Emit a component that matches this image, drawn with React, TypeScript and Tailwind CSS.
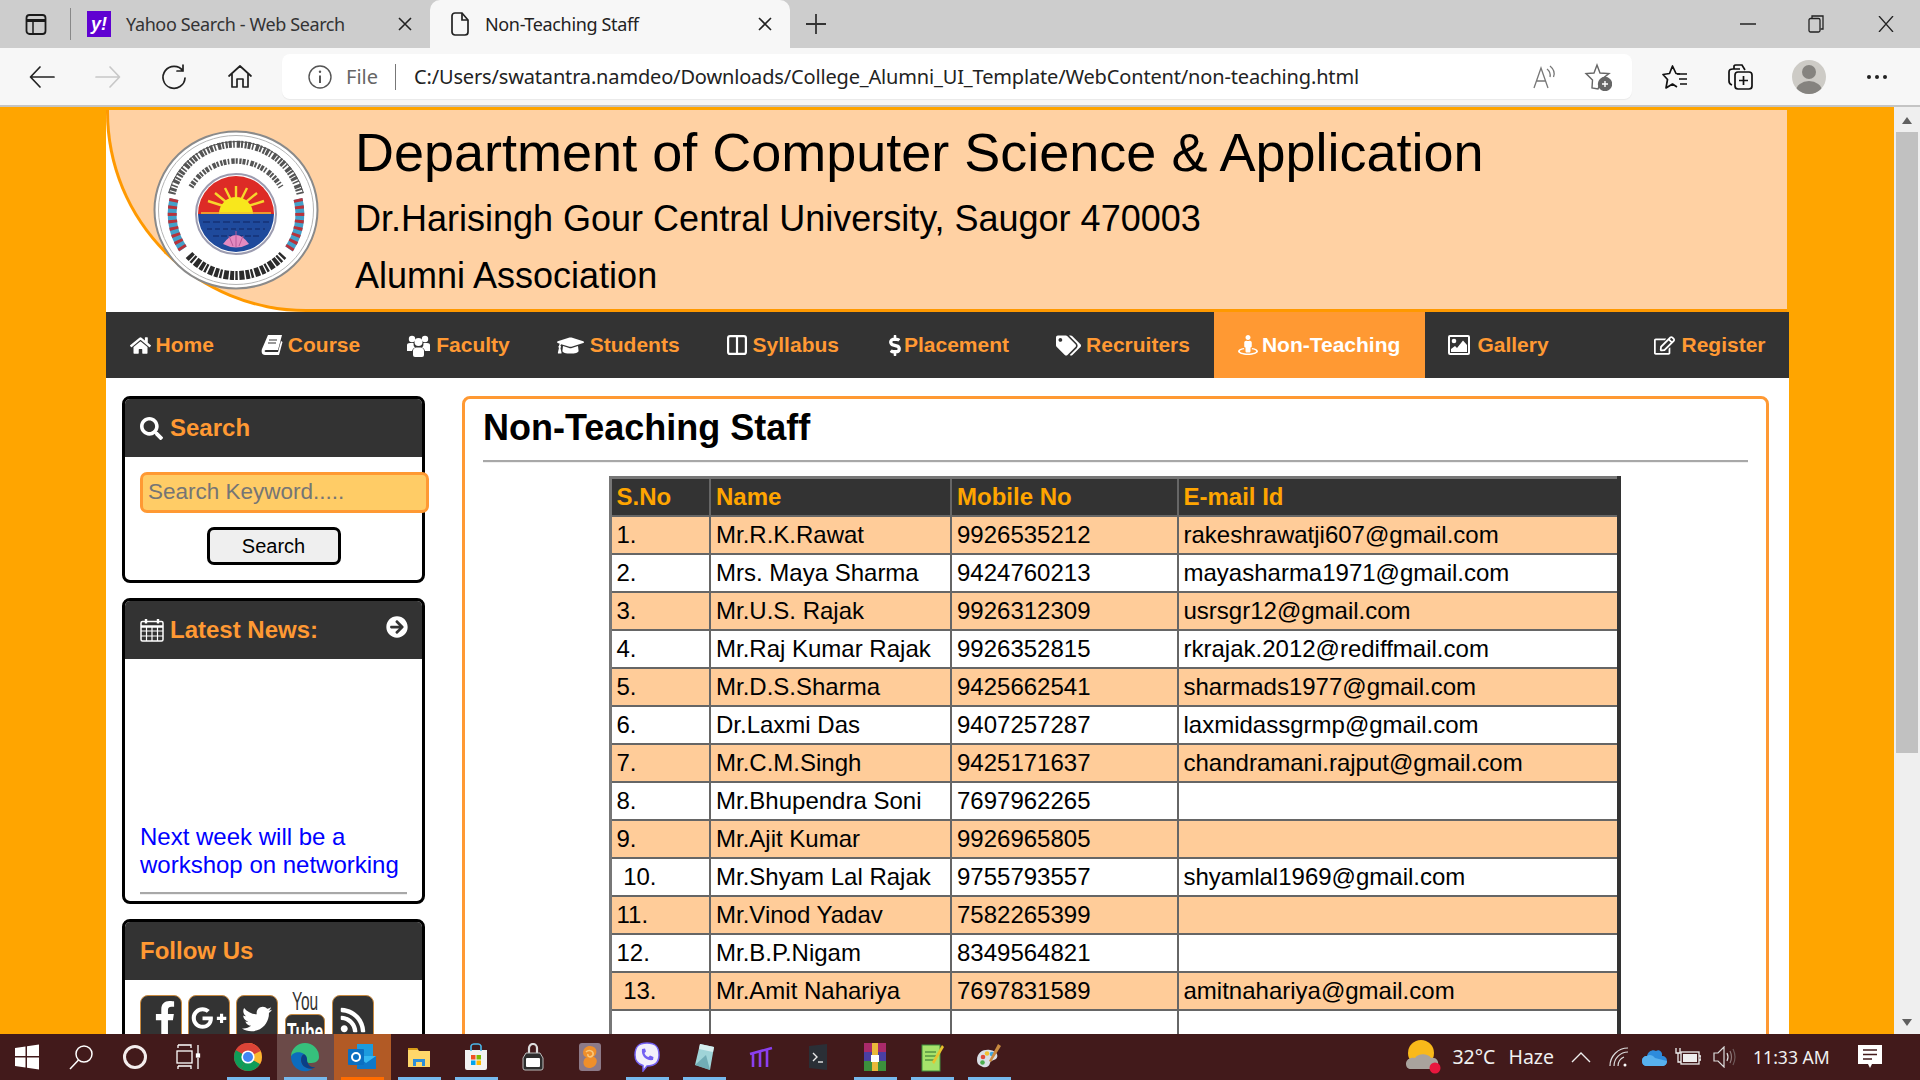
import React from "react";
import { FaHome, FaGraduationCap, FaDollarSign, FaTags, FaStreetView, FaRegEdit, FaSearch, FaArrowCircleRight, FaFacebookF, FaGooglePlusG, FaTwitter, FaRss } from "react-icons/fa";

const UI = { fontFamily: '"Noto Sans", "Open Sans", sans-serif' };

function Logo() {
  const dash1 = "2.2 1 3 1.4 1.6 2 3.4 1 2 1.6";
  return (
    <svg width="166" height="160" viewBox="0 0 166 160" className="shrink-0">
      <ellipse cx="83" cy="80" rx="81.5" ry="78.5" fill="#fff" stroke="#8a8a8a" strokeWidth="2" />
      <ellipse cx="83" cy="80" rx="77.5" ry="74.5" fill="none" stroke="#b5b5b5" strokeWidth="1" />
      <path d="M19 64 A66 66 0 0 1 147 64" fill="none" stroke="#555" strokeWidth="7" strokeDasharray={dash1} />
      <path d="M15.5 63 A70 70 0 0 1 150.5 63" fill="none" stroke="#555" strokeWidth="1" />
      <path d="M38 57 A52 52 0 0 1 128 57" fill="none" stroke="#555" strokeWidth="5.5" strokeDasharray={dash1} />
      <path d="M36 125 A64 64 0 0 0 130 125" fill="none" stroke="#2b2b2b" strokeWidth="9" strokeDasharray="4 1.2 2.4 1.6 5 1.4" />
      <path d="M21 69 A63 63 0 0 0 30 119" fill="none" stroke="#43a0c9" strokeWidth="9" />
      <path d="M21 69 A63 63 0 0 0 30 119" fill="none" stroke="#b8323b" strokeWidth="9" strokeDasharray="3 4" />
      <path d="M145 69 A63 63 0 0 1 136 119" fill="none" stroke="#43a0c9" strokeWidth="9" />
      <path d="M145 69 A63 63 0 0 1 136 119" fill="none" stroke="#b8323b" strokeWidth="9" strokeDasharray="3 4" />
      <circle cx="83" cy="84" r="40" fill="#fff" stroke="#9c9cb0" strokeWidth="2" />
      <path d="M45 84 A38 38 0 0 1 121 84 Z" fill="#dd2b26" />
      <path d="M45 84 A38 38 0 0 0 121 84 Z" fill="#1f4a9c" />
      <g stroke="#f7d62c" strokeWidth="2.4">
        <path d="M83 80 V56" /><path d="M83 80 L72 58" /><path d="M83 80 L94 58" /><path d="M83 80 L62 63" /><path d="M83 80 L104 63" /><path d="M83 80 L55 71" /><path d="M83 80 L111 71" />
      </g>
      <path d="M66 84 A17 17 0 0 1 100 84 Z" fill="#f8e71c" />
      <path d="M48 83 H118" stroke="#f2c230" strokeWidth="1.5" />
      <g stroke="#163275" strokeWidth="1.4" fill="none">
        <path d="M50 92 H116" strokeDasharray="7 3" /><path d="M54 99 H112" strokeDasharray="5 3" /><path d="M60 106 H106" strokeDasharray="6 2" />
      </g>
      <path d="M70 114 Q83 96 96 114 Q83 121 70 114 Z" fill="#e58ac0" />
      <path d="M83 101 V117 M76 106 L80 116 M90 106 L86 116" stroke="#b95b99" strokeWidth="1" />
    </svg>
  );
}

function TabIconBox() {
  return (
    <svg width="24" height="24" viewBox="0 0 24 24" fill="none" stroke="#1a1a1a" strokeWidth="1.8">
      <rect x="2.5" y="3" width="19" height="19" rx="3" />
      <path d="M3 8.5 H21" strokeWidth="3" /><path d="M9 9 V21.5" strokeWidth="1.5" />
    </svg>
  );
}

function Page({ className = "" }: { className?: string }) {
  return (
    <svg width="20" height="24" viewBox="0 0 20 24" fill="none" stroke="#222" strokeWidth="1.7" className={className}>
      <path d="M2 4 a3 3 0 0 1 3 -3 H12 L18 8 V20 a3 3 0 0 1 -3 3 H5 a3 3 0 0 1 -3 -3 Z" /><path d="M12 1 V8 H18" />
    </svg>
  );
}

function ToolIcon({ children, w = 28 }: { children: React.ReactNode; w?: number }) {
  return <svg width={w} height="28" viewBox="0 0 28 28" fill="none" stroke="#222" strokeWidth="1.7" strokeLinecap="round" strokeLinejoin="round">{children}</svg>;
}

function BrowserChrome() {
  return (
    <div style={UI}>
      <div className="flex h-[48px] items-end bg-[#cdcdcd] text-[18px] text-[#333]">
        <div className="flex h-[48px] w-[70px] items-center pl-[24px]"><TabIconBox /></div>
        <div className="h-[32px] w-px self-center bg-[#888]" />
        <div className="flex h-[48px] w-[359px] items-center pl-[16px]">
          <div className="flex h-[26px] w-[24px] items-center justify-center bg-[#5f01d1] text-[18px] font-bold italic text-white" style={{ fontFamily: '"Liberation Sans", sans-serif' }}>y!</div>
          <span className="ml-[15px] w-[272px] whitespace-nowrap tracking-[-0.38px]">Yahoo Search - Web Search</span>
          <svg width="14" height="14" viewBox="0 0 14 14" stroke="#222" strokeWidth="1.6"><path d="M1 1 L13 13 M13 1 L1 13" /></svg>
        </div>
        <div className="flex h-[48px] w-[360px] items-center rounded-t-[10px] bg-[#f7f7f7] pl-[20px]">
          <Page />
          <span className="ml-[15px] w-[273px] whitespace-nowrap tracking-[-0.35px] text-[#222]">Non-Teaching Staff</span>
          <svg width="14" height="14" viewBox="0 0 14 14" stroke="#222" strokeWidth="1.6"><path d="M1 1 L13 13 M13 1 L1 13" /></svg>
        </div>
        <div className="flex h-[48px] w-[50px] items-center pl-[15px]">
          <svg width="22" height="22" viewBox="0 0 22 22" stroke="#333" strokeWidth="1.8"><path d="M11 1 V21 M1 11 H21" /></svg>
        </div>
        <div className="ml-auto flex h-[48px] items-center pr-[26px]">
          <svg width="16" height="16" viewBox="0 0 16 16" stroke="#222" strokeWidth="1.5"><path d="M0 8 H16" /></svg>
          <svg className="ml-[52px]" width="16" height="18" viewBox="0 0 16 18" fill="none" stroke="#222" strokeWidth="1.3"><rect x="1" y="3.5" width="11" height="13.5" rx="1.5" /><path d="M4 3 V1 H15 V14 H12.5" /></svg>
          <svg className="ml-[54px]" width="16" height="16" viewBox="0 0 16 16" stroke="#222" strokeWidth="1.3"><path d="M1 0 L15 16 M15 0 L1 16" /></svg>
        </div>
      </div>
      <div className="flex h-[59px] items-center border-b-2 border-[#c4c4c4] bg-[#f7f7f7]">
        <div className="flex w-[282px] items-center pl-[28px]">
          <div className="w-[66px]"><ToolIcon><path d="M26 14 H3 M12 4 L2.5 14 L12 24" /></ToolIcon></div>
          <div className="w-[66px]"><ToolIcon><path d="M2 14 H25 M16 4 L25.5 14 L16 24" stroke="#c8c8c8" /></ToolIcon></div>
          <div className="w-[66px]"><ToolIcon><path d="M23 8 A11 11 0 1 0 25 15 M23 2 V8 H17" /></ToolIcon></div>
          <ToolIcon><path d="M3 13 L14 3 L25 13 M6 11 V24 H11 V16 H17 V24 H22 V11" /></ToolIcon>
        </div>
        <div className="flex h-[45px] w-[1350px] items-center rounded-[8px] bg-white pl-[26px] shadow-[0_1px_1px_rgba(0,0,0,0.06)]">
          <svg width="24" height="24" viewBox="0 0 24 24" fill="none" stroke="#555" strokeWidth="1.4"><circle cx="12" cy="12" r="11" /><path d="M12 10.5 V18" strokeWidth="2" /><circle cx="12" cy="6.8" r="1.2" fill="#555" stroke="none" /></svg>
          <span className="ml-[14px] text-[20px] text-[#666]">File</span>
          <div className="ml-[17px] h-[26px] w-px bg-[#777]" />
          <span className="ml-[18px] whitespace-nowrap text-[20px] tracking-[-0.16px] text-[#222]">C:/Users/swatantra.namdeo/Downloads/College_Alumni_UI_Template/WebContent/non-teaching.html</span>
          <div className="ml-auto flex items-center gap-[26px] pr-[20px]">
            <svg width="26" height="26" viewBox="0 0 26 26" fill="none" stroke="#777" strokeWidth="1.3"><path d="M2 24 L9 4 L16 24 M4.5 17 H13.5" /><path d="M15 5 Q19 8 18 13 M18 2 Q24 7 21.5 13" /></svg>
            <svg width="28" height="28" viewBox="0 0 28 28" fill="none" stroke="#666" strokeWidth="1.4"><path d="M13 2 L16 10 L25 10.5 L18 16 L14 26 L8 25 L8.5 17 L2 10.5 L10 10 Z" /><circle cx="21" cy="21" r="6.5" fill="#666" /><path d="M21 18 V24 M18 21 H24" stroke="#fff" strokeWidth="1.4" /></svg>
          </div>
        </div>
        <div className="flex flex-1 items-center pl-[30px]">
          <div className="w-[64px]"><svg width="26" height="26" viewBox="0 0 26 26" fill="none" stroke="#111" strokeWidth="1.7" strokeLinejoin="round"><path d="M18 10 L14 9.5 L10.5 2 L7.5 9.5 L1 10.5 L5.5 15.5 L4 24 L10.5 20 L15 23" /><path d="M15 10 H25 M17 15 H25 M18 20 H25" /></svg></div>
          <div className="w-[66px]"><svg width="28" height="28" viewBox="0 0 28 28" fill="none" stroke="#111" strokeWidth="1.7"><path d="M8 6 V3 a2 2 0 0 1 2 -1 H16 L19 7 M6 22 Q3 21 3 18 V9 Q3 6 7 6 H14" /><rect x="9" y="9" width="17" height="17" rx="3" /><path d="M17.5 13 V22 M13 17.5 H22" /></svg></div>
          <div className="flex h-[34px] w-[34px] items-end justify-center overflow-hidden rounded-full bg-[#cdcbc6]">
            <svg width="34" height="34" viewBox="0 0 34 34" fill="#85837f"><circle cx="17" cy="12" r="7" /><ellipse cx="17" cy="31" rx="13" ry="10" /></svg>
          </div>
          <svg className="ml-[40px]" width="22" height="6" viewBox="0 0 22 6" fill="#222"><circle cx="3" cy="3" r="2" /><circle cx="11" cy="3" r="2" /><circle cx="19" cy="3" r="2" /></svg>
        </div>
      </div>
    </div>
  );
}

function BookIcon() {
  return <svg width="22" height="22" viewBox="0 0 22 22" fill="#fff"><path d="M7 1 H21 L17 16 H5 C3.5 16 3 17.5 4.5 18 H17 L20 7 L21.5 8 L18 21 H4 C1 21 0 18 1 15 Z" /><path d="M8 6 H16 M7 9 H15" stroke="#333" strokeWidth="1.2" /></svg>;
}
function FacultyIcon() {
  return <svg width="23" height="23" viewBox="0 0 23 23" fill="#fff"><circle cx="5" cy="5" r="3.2" /><circle cx="18" cy="5" r="3.2" /><circle cx="11.5" cy="8" r="4" /><path d="M0 11 Q0 9 3 9 H6.5 Q6.2 12 8 13.5 Q5.5 14 5 17 H0 Z" /><path d="M23 11 Q23 9 20 9 H16.5 Q16.8 12 15 13.5 Q17.5 14 18 17 H23 Z" /><path d="M6 17 Q6 14 9 13.5 H14 Q17 14 17 17 V21 Q17 23 15 23 H8 Q6 23 6 21 Z" /></svg>;
}
function ColumnsIcon() {
  return <svg width="20" height="20" viewBox="0 0 20 20" fill="none" stroke="#fff" strokeWidth="2.2"><rect x="1.1" y="1.1" width="17.8" height="17.8" rx="2" /><path d="M10 1 V19" /></svg>;
}
function GalleryIcon() {
  return <svg width="22" height="20" viewBox="0 0 22 20"><rect x="1" y="1" width="20" height="18" rx="1" fill="#333" stroke="#fff" strokeWidth="2" /><circle cx="6" cy="6" r="2.3" fill="#fff" /><path d="M3 17 V14 L7 11 L9 13 L15 5.5 L19 10 V17 Z" fill="#fff" /></svg>;
}
function CalendarIcon() {
  return <svg width="24" height="24" viewBox="0 0 24 24" fill="none" stroke="#fff" strokeWidth="1.5"><rect x="1" y="3.5" width="22" height="19.5" rx="1.5" /><path d="M1 8.5 H23" strokeWidth="2.5" /><path d="M1 13 H23 M1 18 H23 M6.5 9 V23 M12 9 V23 M17.5 9 V23" strokeWidth="1.2" /><path d="M6 1 V5.5 M18 1 V5.5" strokeWidth="2.4" /></svg>;
}

function NavItem({ icon, label, box, active = false, className = "" }: { icon: React.ReactNode; label: string; box: string; active?: boolean; className?: string }) {
  return (
    <div className={`flex h-full items-center px-[23.5px] ${active ? "bg-[#ff9933] text-white" : "text-[#ff9933]"} ${className}`}>
      <span className={`flex text-white ${box}`}>{icon}</span>
      <span>{label}</span>
    </div>
  );
}

function Panel({ header, children, className = "" }: { header: React.ReactNode; children: React.ReactNode; className?: string }) {
  return (
    <section className={`w-[303px] shrink-0 rounded-[8px] border-[3px] border-black bg-white ${className}`}>
      <div className="flex h-[58px] items-center rounded-t-[5px] bg-[#333] px-[15px] text-[24px] font-bold text-[#ff9933]">{header}</div>
      {children}
    </section>
  );
}

function SocialBox({ children }: { children: React.ReactNode }) {
  return <div className="flex h-[58px] w-[42px] items-center justify-center rounded-[8px] border border-[#c98a3f] bg-[#333] text-white">{children}</div>;
}

function Sidebar() {
  return (
    <aside className="flex w-[303px] shrink-0 flex-col gap-[15px]">
      <Panel header={<><FaSearch className="mr-[7px] text-[23px] text-white" /><span>Search</span></>} className="h-[187px]">
        <div className="flex flex-col items-center">
          <div className="mt-[15px] ml-[15px] flex h-[41px] w-[289px] shrink-0 items-center self-start rounded-[7px] border-[3.5px] border-[#ff9933] bg-[#ffcc66] pb-[2px] pl-[5px] text-[22.5px] text-[#757575]">Search Keyword.....</div>
          <button className="mt-[14px] h-[38px] w-[134px] rounded-[7px] border-[3px] border-black bg-[#efefef] text-[20px] text-black">Search</button>
        </div>
      </Panel>
      <Panel header={<><span className="mr-[6px] flex"><CalendarIcon /></span><span>Latest News:</span><FaArrowCircleRight className="ml-auto mr-[-1px] mb-[6px] text-[22px] text-white" /></>} className="h-[306px]">
        <div className="px-[15px] pt-[164px] text-[24px] leading-[28px] text-[#0000ff]">
          <p>Next week will be a workshop on networking</p>
          <div className="mt-[13px] h-[3px] border-t-2 border-[#a8a8a8] bg-[#f0f0f0]" />
        </div>
      </Panel>
      <Panel header={<span>Follow Us</span>} className="h-[200px]">
        <div className="flex gap-[6px] px-[15px] pt-[15px]">
          <SocialBox><FaFacebookF className="mt-[-12px] ml-[8px] text-[34px]" /></SocialBox>
          <SocialBox><FaGooglePlusG className="mt-[-12px] text-[36px]" /></SocialBox>
          <SocialBox><FaTwitter className="mt-[-10px] text-[30px]" /></SocialBox>
          <div className="mt-[-4px] flex w-[42px] flex-col items-center">
            <span className="h-[20px] whitespace-nowrap text-[25px] leading-[20px] text-[#333] [transform:scaleX(0.62)]">You</span>
            <div className="mt-[3px] flex h-[40px] w-[40px] justify-center rounded-[7px] border border-[#c98a3f] bg-[#333] text-[26px] font-bold leading-[34px] text-white"><span className="shrink-0 whitespace-nowrap [transform:scaleX(0.6)]">Tube</span></div>
          </div>
          <SocialBox><FaRss className="mt-[-8px] text-[28px]" /></SocialBox>
        </div>
      </Panel>
    </aside>
  );
}

const staff: [string, string, string, string][] = [
  ["1.", "Mr.R.K.Rawat", "9926535212", "rakeshrawatji607@gmail.com"],
  ["2.", "Mrs. Maya Sharma", "9424760213", "mayasharma1971@gmail.com"],
  ["3.", "Mr.U.S. Rajak", "9926312309", "usrsgr12@gmail.com"],
  ["4.", "Mr.Raj Kumar Rajak", "9926352815", "rkrajak.2012@rediffmail.com"],
  ["5.", "Mr.D.S.Sharma", "9425662541", "sharmads1977@gmail.com"],
  ["6.", "Dr.Laxmi Das", "9407257287", "laxmidassgrmp@gmail.com"],
  ["7.", "Mr.C.M.Singh", "9425171637", "chandramani.rajput@gmail.com"],
  ["8.", "Mr.Bhupendra Soni", "7697962265", ""],
  ["9.", "Mr.Ajit Kumar", "9926965805", ""],
  ["\u00a010.", "Mr.Shyam Lal Rajak", "9755793557", "shyamlal1969@gmail.com"],
  ["11.", "Mr.Vinod Yadav", "7582265399", ""],
  ["12.", "Mr.B.P.Nigam", "8349564821", ""],
  ["\u00a013.", "Mr.Amit Nahariya", "7697831589", "amitnahariya@gmail.com"],
  ["", "", "", ""],
];

function StaffTable() {
  const cell = "border-2 border-[#666] px-[5px] py-0 text-left align-middle whitespace-nowrap";
  return (
    <table className="mx-auto mt-[13px] w-[1012px] -translate-x-[1px] table-fixed border-collapse border-t-[3px] border-r-[4px] border-b-[3px] border-l-[3px] border-t-[#777] border-r-[#333] border-l-[#777] border-b-[#333] text-[24px] text-black">
      <colgroup><col className="w-[100px]" /><col className="w-[241px]" /><col className="w-[226.5px]" /><col /></colgroup>
      <thead>
        <tr className="h-[38px] bg-[#333] font-bold text-[#ffa500]">
          <th className={cell}>S.No</th><th className={cell}>Name</th><th className={cell}>Mobile No</th><th className={cell}>E-mail Id</th>
        </tr>
      </thead>
      <tbody>
        {staff.map((r, i) => (
          <tr key={i} className={`h-[38px] ${i % 2 === 0 && i !== 13 ? "bg-[#ffcc99]" : "bg-white"}`}>
            {r.map((c, j) => <td key={j} className={cell}>{c}</td>)}
          </tr>
        ))}
      </tbody>
    </table>
  );
}

function Site() {
  return (
    <div className="h-full w-[1683px] bg-white" style={{ fontFamily: '"Liberation Sans", Arial, sans-serif' }}>
      <div className="border-t-[3px] border-r-[2px] border-[#ffa500] bg-white">
        <header className="flex h-[202px] items-center rounded-bl-[200px] border-b-[3px] border-l-[3px] border-[#ff9900] bg-[#ffd1a3] pl-[44px]">
          <Logo />
          <div className="ml-[36px] text-black">
            <h1 className="h-[69px] text-[54px] leading-[63px]">Department of Computer Science &amp; Application</h1>
            <p className="h-[57px] text-[36px] leading-[57px]">Dr.Harisingh Gour Central University, Saugor 470003</p>
            <p className="h-[52px] text-[36px] leading-[57px]">Alumni Association</p>
          </div>
        </header>
      </div>
      <nav className="flex h-[66px] w-[1683px] items-center bg-[#333] text-[21px] font-bold">
        <NavItem icon={<FaHome className="text-[21px]" />} box="w-[26px]" label="Home" />
        <NavItem icon={<BookIcon />} box="w-[27px]" label="Course" />
        <NavItem icon={<FacultyIcon />} box="w-[29px]" label="Faculty" />
        <NavItem icon={<FaGraduationCap className="text-[27px]" />} box="w-[33px]" label="Students" />
        <NavItem icon={<ColumnsIcon />} box="w-[26px]" label="Syllabus" />
        <NavItem icon={<FaDollarSign className="text-[21px]" />} box="w-[18px]" label="Placement" />
        <NavItem icon={<FaTags className="text-[25px]" />} box="w-[30px]" label="Recruiters" />
        <NavItem icon={<FaStreetView className="text-[20px]" />} box="w-[24px]" label="Non-Teaching" active className="ml-[1px] pr-[24.5px]" />
        <NavItem icon={<GalleryIcon />} box="w-[29px]" label="Gallery" />
        <NavItem icon={<FaRegEdit className="text-[21px]" />} box="w-[27px]" label="Register" className="ml-auto" />
      </nav>
      <div className="flex gap-[37px] pt-[18px] pl-[16px] pr-[20px]">
        <Sidebar />
        <main className="h-[900px] flex-1 rounded-[8px] border-[3px] border-[#ff9933] bg-white px-[18px]">
          <h2 className="h-[61px] text-[36px] font-bold leading-[58px] text-black">Non-Teaching Staff</h2>
          <div className="h-[3px] border-t-2 border-[#a8a8a8] bg-[#f0f0f0]" />
          <StaffTable />
        </main>
      </div>
    </div>
  );
}

function Scrollbar() {
  return (
    <div className="flex w-[26px] shrink-0 flex-col items-center bg-[#efefef] pt-[10px]">
      <div className="h-0 w-0 border-x-[5px] border-b-[7px] border-x-transparent border-b-[#606060]" />
      <div className="mt-[8px] h-[621px] w-[22px] bg-[#c1c1c1]" />
      <div className="mt-auto mb-[8px] h-0 w-0 border-x-[5px] border-t-[7px] border-x-transparent border-t-[#606060]" />
    </div>
  );
}

function TaskCell({ children, under, bg = "" }: { children: React.ReactNode; under?: string; bg?: string }) {
  return (
    <div className={`relative flex h-[46px] w-[57px] shrink-0 items-center justify-center ${bg}`}>
      {children}
      {under && <div className={`absolute right-[7px] bottom-0 left-[7px] h-[3px] ${under}`} />}
    </div>
  );
}

function Taskbar() {
  const blue = "bg-[#76b9ed]";
  return (
    <div className="flex h-[46px] items-center bg-[#421a1b] text-[#f0f0f0]" style={UI}>
      <div className="flex w-[219.5px] items-center">
        <div className="flex w-[54px] justify-center"><svg width="26" height="26" viewBox="0 0 26 26" fill="#fff"><path d="M1 4 L11.5 2.5 V12 H1 Z M13 2.3 L25 0.5 V12 H13 Z M1 13.5 H11.5 V23.5 L1 22 Z M13 13.5 H25 V25.5 L13 23.7 Z" /></svg></div>
        <div className="flex w-[54px] justify-center"><svg width="26" height="26" viewBox="0 0 26 26" fill="none" stroke="#fff" strokeWidth="1.5"><circle cx="16" cy="10" r="8" /><path d="M10.5 16 L2 25" /></svg></div>
        <div className="flex w-[54px] justify-center"><div className="h-[24px] w-[24px] rounded-full border-[3.5px] border-[#f3eded]" /></div>
        <div className="flex w-[54px] justify-center"><svg width="26" height="26" viewBox="0 0 26 26" fill="none" stroke="#fff" strokeWidth="1.3"><rect x="1" y="7" width="15" height="12" /><path d="M2 4 V1 M2 1 H15 V4 M2 22 V25 M2 22 H15 V25 M22 1 V10 M22 14 V25" /><rect x="20.5" y="10" width="3" height="3" fill="#fff" /></svg></div>
      </div>
      <div className="flex">
        <TaskCell under={blue}><svg width="30" height="30" viewBox="0 0 30 30"><circle cx="15" cy="15" r="14" fill="#db4437" /><path d="M15 15 L27.1 22 A14 14 0 0 1 8 27.1 Z" fill="#0f9d58" /><path d="M15 15 L8 27.1 A14 14 0 0 1 2.9 8 Z" fill="#0f9d58" /><path d="M15 1 A14 14 0 0 1 27.1 22 L15 15 Z" fill="#fbc02d" opacity="0.95" /><path d="M15 1 A14 14 0 0 0 2.9 8 L15 15 L27.6 9 A14 14 0 0 0 15 1 Z" fill="#db4437" /><circle cx="15" cy="15" r="6.6" fill="#fff" /><circle cx="15" cy="15" r="5" fill="#4285f4" /></svg></TaskCell>
        <TaskCell under={blue} bg="bg-[#6b4a48]"><svg width="30" height="30" viewBox="0 0 30 30"><path d="M1 15 A14 14 0 0 1 29 15 C29 20 24 21 20 21 C14 21 19 14 12 12 C6 11 2 13 1 15 Z" fill="#36c07c" /><path d="M1 15 C2 10 10 9 14 12 C10 14 10 22 15 25 C20 28 24 27 25 25 A14 14 0 0 1 1 15 Z" fill="#0c6cbd" /><path d="M14 12 C10 14 10 22 15 25 C19 27 23 27 25 25 C20 26 17 22 17 17 C17 15 16 13 14 12 Z" fill="#0a3f86" /></svg></TaskCell>
        <TaskCell under="bg-[#ff6c00]" bg="bg-[#b25a25]"><svg width="30" height="30" viewBox="0 0 30 30"><rect x="10" y="2" width="16" height="14" fill="#1c9bde" /><path d="M10 14 L29 14 V27 H10 Z" fill="#35b8f1" /><path d="M10 14 L19 21 L29 14 V27 H10 Z" fill="#0f78c9" /><rect x="1" y="7" width="16" height="16" rx="1" fill="#0b6fc2" /><circle cx="9" cy="15" r="4" fill="none" stroke="#fff" strokeWidth="2" /></svg></TaskCell>
        <TaskCell under={blue}><svg width="24" height="24" viewBox="0 0 24 24"><path d="M1 3 H10 L12 6 H23 V22 H1 Z" fill="#ffd76a" /><path d="M1 3 H10 L11 5 H1 Z" fill="#d99d17" /><path d="M6 14 H18 V21 H15 V17 H9 V21 H6 Z" fill="#2d8ed9" /></svg></TaskCell>
        <TaskCell under={blue}><svg width="24" height="28" viewBox="0 0 24 28"><path d="M1 7 H23 V25 a2 2 0 0 1 -2 2 H3 a2 2 0 0 1 -2 -2 Z" fill="#f2f2f2" /><path d="M7 8 V3 a3 3 0 0 1 3 -2 h4 a3 3 0 0 1 3 2 V8" fill="none" stroke="#4bb8ea" strokeWidth="1.6" /><rect x="7" y="12" width="4.5" height="4.5" fill="#f25022" /><rect x="12.5" y="12" width="4.5" height="4.5" fill="#7fba00" /><rect x="7" y="17.5" width="4.5" height="4.5" fill="#00a4ef" /><rect x="12.5" y="17.5" width="4.5" height="4.5" fill="#ffb900" /></svg></TaskCell>
        <TaskCell><svg width="22" height="28" viewBox="0 0 22 28"><path d="M7 10 V5 a4 4 0 0 1 8 0 V10" fill="none" stroke="#ddd" strokeWidth="2.2" /><path d="M4 10 H18 L21 15 V25 a2 2 0 0 1 -2 2 H3 a2 2 0 0 1 -2 -2 V15 Z" fill="#2d2d2d" stroke="#bbb" /><rect x="4" y="15" width="14" height="9" rx="1" fill="#fff" /></svg></TaskCell>
        <TaskCell><svg width="22" height="28" viewBox="0 0 22 28"><rect width="22" height="28" rx="3" fill="#8d7a88" /><path d="M11 3 C19 3 19 12 14 14 C20 14 19 25 10 25 C3 25 3 16 8 14 C2 14 3 3 11 3 Z" fill="#ef8f2a" /><path d="M7 9 C10 6 15 8 14 12 C12 15 8 14 9 11" fill="none" stroke="#f9c77a" strokeWidth="1.6" /></svg></TaskCell>
        <TaskCell under={blue}><svg width="26" height="30" viewBox="0 0 26 30"><path d="M13 1 C22 1 25 5 25 13 C25 21 21 24 13 24 L9 29 V23.5 C3 22 1 18 1 13 C1 5 4 1 13 1 Z" fill="#f2effa" stroke="#7360f2" strokeWidth="1.5" /><path d="M8 7 C7 14 12 19 19 18 L19.5 15 L16 13.5 L14.5 15 C12.5 14.5 11 13 10.5 11 L12 9.5 L11 6.5 Z" fill="#7360f2" /></svg></TaskCell>
        <TaskCell under={blue}><svg width="24" height="28" viewBox="0 0 24 28"><path d="M8 1 L22 4 L18 27 L3 22 Z" fill="#9fd4d8" /><path d="M8 1 L22 4 L21 9 L7 6 Z" fill="#d7eef0" /><path d="M3 22 L18 27 L14 12 Z" fill="#5e9da8" opacity="0.7" /></svg></TaskCell>
        <TaskCell><svg width="24" height="24" viewBox="0 0 24 24" fill="none" stroke="#8a3ff0" strokeWidth="2.6"><path d="M4 8 V22 M11 7 V22 M18 5 V22 M1 9 L23 3" /></svg></TaskCell>
        <TaskCell><svg width="22" height="28" viewBox="0 0 22 28"><path d="M2 3 L20 1 V27 L2 25 Z" fill="#2a2f36" /><path d="M6 10 L10 14 L6 18" fill="none" stroke="#e8e8e8" strokeWidth="1.4" /><path d="M11 19 H16" stroke="#e8e8e8" strokeWidth="1.4" /></svg></TaskCell>
        <TaskCell under={blue}><svg width="26" height="30" viewBox="0 0 26 30"><rect x="2" y="1" width="22" height="9" fill="#a92a6a" /><rect x="2" y="10" width="22" height="9" fill="#4a3fa3" /><rect x="2" y="19" width="22" height="10" fill="#3c8f3c" /><rect x="10" y="1" width="6" height="28" fill="#e9b93a" /><rect x="9" y="13" width="8" height="7" fill="#fff" /></svg></TaskCell>
        <TaskCell under={blue}><svg width="24" height="30" viewBox="0 0 24 30"><rect x="2" y="3" width="18" height="26" fill="#a7e26b" stroke="#3f8f3f" /><path d="M5 10 H16 M5 14 H16 M5 18 H14" stroke="#2f6f2f" /><path d="M12 20 L22 3 L24 5 L14 22 Z" fill="#e7c32d" /></svg></TaskCell>
        <TaskCell under={blue}><svg width="28" height="28" viewBox="0 0 28 28"><path d="M2 17 C2 9 9 6 15 7 C22 8 24 13 21 16 C18 18 16 17 15 20 C14 25 9 25 6 23 C3 22 2 20 2 17 Z" fill="#d9dfe6" /><circle cx="8" cy="14" r="2.3" fill="#e04b3a" /><circle cx="12" cy="10.5" r="2.3" fill="#f2c230" /><circle cx="17" cy="11" r="2.3" fill="#3fa7e0" /><circle cx="7.5" cy="19.5" r="2.3" fill="#4cae4f" /><path d="M23 1 L26 3 L16 19 L14 18 Z" fill="#c98a3f" /></svg></TaskCell>
      </div>
      <div className="ml-auto flex h-full items-center text-[19.5px] whitespace-nowrap">
        <svg width="36" height="34" viewBox="0 0 36 34"><circle cx="16" cy="13" r="13" fill="#f9b91a" /><path d="M1 24 C1 19 6 17 10 18 C13 13 23 13 26 18 C31 17 34 21 33 25 C32 28 30 29 27 29 H6 C3 29 1 27 1 24 Z" fill="#a9a39d" /><circle cx="30" cy="28" r="5.5" fill="#e8173e" /></svg>
        <span className="ml-[11px]">32°C</span>
        <span className="ml-[13px]">Haze</span>
        <svg className="ml-[17px]" width="20" height="12" viewBox="0 0 20 12" fill="none" stroke="#eee" strokeWidth="1.4"><path d="M1 11 L10 2 L19 11" /></svg>
        <svg className="ml-[17px]" width="22" height="22" viewBox="0 0 22 22" fill="none" stroke="#ddd" strokeWidth="1.2"><path d="M2 20 A18 18 0 0 1 20 2 M6 20 A14 14 0 0 1 20 6 M10 20 A10 10 0 0 1 16 11" /><circle cx="17" cy="19" r="1.5" fill="#fff" stroke="none" /></svg>
        <svg className="ml-[10.5px]" width="26" height="18" viewBox="0 0 26 18"><path d="M1 13 C1 10 3 8 6 8 C7 3 12 1 15 3 C18 1 22 4 21 8 C24 8 26 10 26 13 C26 16 24 18 21 18 H6 C3 18 1 16 1 13 Z" fill="#2d8bdc" /><path d="M6 8 C8 6 12 7 14 10 L26 13 C26 16 24 18 21 18 H6 C3 18 1 16 1 13 C1 10 3 8 6 8 Z" fill="#58b1ee" /></svg>
        <svg className="ml-[8.5px]" width="26" height="20" viewBox="0 0 26 20" fill="none" stroke="#eee" strokeWidth="1.3"><rect x="6" y="5" width="18" height="12" /><rect x="8" y="7" width="14" height="8" fill="#eee" stroke="none" /><path d="M24 9 H26 V13 H24 M1 1 V6 H5 V1 M3 6 V15 H6" /></svg>
        <svg className="ml-[12px]" width="24" height="22" viewBox="0 0 24 22" fill="none" stroke="#ddd" strokeWidth="1.2"><path d="M1 7 H5 L11 1 V21 L5 15 H1 Z" /><path d="M14 7 Q16 11 14 15" /><path d="M17 5 Q20 11 17 17" stroke="#8f7a7a" /><path d="M20 3 Q24 11 20 19" stroke="#6f5a5a" /></svg>
        <span className="ml-[16px] w-[105px] text-[17.6px]">11:33 AM</span>
        <svg className="mr-[38px]" width="24" height="24" viewBox="0 0 24 24"><path d="M0 0 H24 V19 H14 L12 23 L10 19 H0 Z" fill="#fff" /><path d="M5 5 H19 M5 9.5 H19 M5 14 H14" stroke="#421a1b" strokeWidth="1.3" /></svg>
      </div>
    </div>
  );
}

export default function App() {
  return (
    <div className="flex h-[1080px] w-[1920px] flex-col overflow-hidden bg-[#ffa500]">
      <BrowserChrome />
      <div className="flex min-h-0 flex-1">
        <div className="flex min-w-0 flex-1 overflow-hidden pl-[106px]">
          <Site />
        </div>
        <Scrollbar />
      </div>
      <Taskbar />
    </div>
  );
}
